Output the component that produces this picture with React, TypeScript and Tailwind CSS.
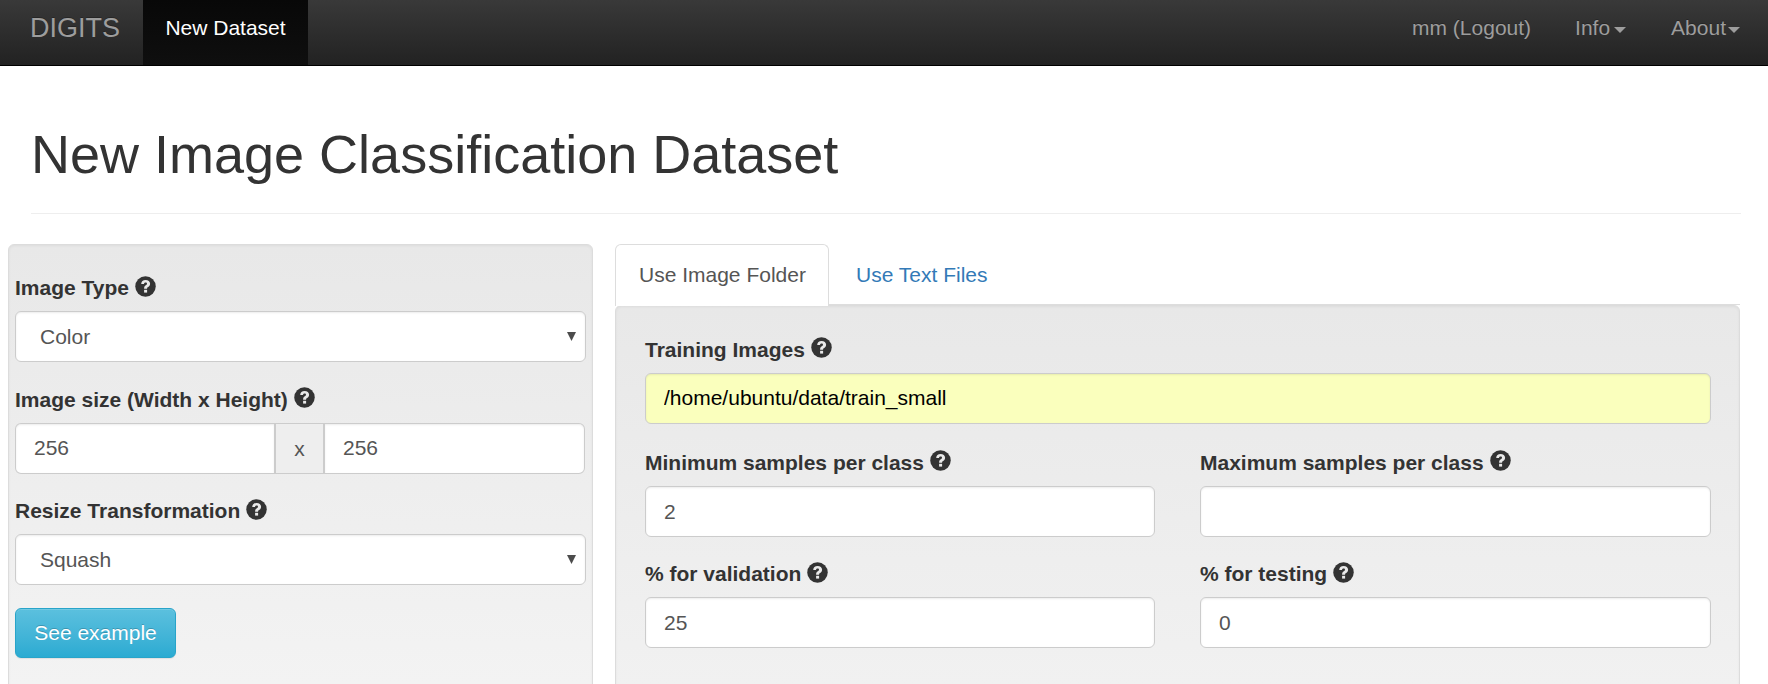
import React from "react";

function Caret({ className = "" }: { className?: string }) {
  return (
    <svg className={"h-[6px] w-3 shrink-0 " + className} viewBox="0 0 12 6" fill="currentColor">
      <path d="M0 0h12L6 6z" />
    </svg>
  );
}

function HelpIcon({ className }: { className: string }) {
  return (
    <svg className={"ml-[6px] size-[21px] shrink-0 " + className} viewBox="0 0 21 21">
      <circle cx="10.5" cy="10.5" r="10.25" fill="#333" />
      <path
        d="M6.2 8.1C6.3 5.4 7.9 4 10.6 4c2.7 0 4.5 1.4 4.5 3.8 0 1.6-.8 2.5-2 3.2-.8.5-1 .8-1 1.7H9.1c0-2 .5-2.8 1.8-3.5.8-.5 1.1-.8 1.1-1.4 0-.7-.5-1.2-1.4-1.2-1 0-1.5.5-1.6 1.5z"
        fill="#e9e9e9"
      />
      <path d="M9.1 13.8h3v2.8h-3z" fill="#e9e9e9" />
    </svg>
  );
}

function Label({ children, icon = "mt-[2px]" }: { children: string; icon?: string }) {
  return (
    <div className="flex h-[30px] font-bold leading-[30px] whitespace-nowrap text-[#333]">
      <span>{children}</span>
      <HelpIcon className={icon} />
    </div>
  );
}

const box =
  "block h-[51px] border border-[#ccc] px-[18px] text-[21px] leading-[30px] shadow-[inset_0_1px_2px_rgba(0,0,0,0.075)] outline-none ";

function TextField({ label, value, icon }: { label: string; value: string; icon?: string }) {
  return (
    <label className="block">
      <Label icon={icon}>{label}</Label>
      <input defaultValue={value} className={box + "mt-2 w-full rounded-[6px] bg-white text-[#555]"} />
    </label>
  );
}

function SelectField({ label, value }: { label: string; value: string }) {
  return (
    <label className="block">
      <Label icon="mt-[3px]">{label}</Label>
      <div className="relative mt-2">
        <select className={box + "w-full appearance-none rounded-[6px] bg-white pl-6 text-[#555]"}>
          <option>{value}</option>
        </select>
        <svg className="absolute top-[21px] right-[10px] h-[9px] w-[9px]" viewBox="0 0 9 9" fill="#4c4c4c">
          <path d="M0 0h9L4.500 9z" />
        </svg>
      </div>
    </label>
  );
}

const well =
  "border border-[#dcdcdc] bg-linear-to-b from-[#e8e8e8] to-[#f5f5f5] shadow-[inset_0_1px_3px_rgba(0,0,0,0.05)] ";

export default function App() {
  return (
    <div className="h-[684px] w-[1768px] overflow-hidden bg-white font-['Liberation_Sans',Arial,sans-serif] text-[21px] leading-[30px] text-[#333]">
      <nav className="flex h-[66px] border-b border-black bg-linear-to-b from-[#393939] to-[#222] text-[#9d9d9d] [text-shadow:0_-1px_0_rgba(0,0,0,0.25)]">
        <a className="w-[143px] pt-[13px] pl-[30px] text-[27px]">DIGITS</a>
        <a className="w-[165px] bg-linear-to-b from-[#080808] to-[#0f0f0f] pt-[13px] text-center text-white">
          New Dataset
        </a>
        <div className="ml-auto flex pt-[13px] pr-7">
          <a>mm (Logout)</a>
          <a className="ml-[44px] flex">
            Info
            <Caret className="mt-[14px] ml-1" />
          </a>
          <a className="ml-[45px] flex">
            About
            <Caret className="mt-[14px] ml-[2px]" />
          </a>
        </div>
      </nav>

      <h1 className="mr-[27px] ml-[31px] h-[148px] border-b border-[#eee] pt-[58px] text-[54px] leading-[60px] whitespace-nowrap">
        New Image Classification Dataset
      </h1>

      <main className="mt-[30px] flex items-start pl-2">
        <section className={well + "h-[520px] w-[585px] rounded-[6px] px-[6px] pt-7"}>
          <SelectField label="Image Type" value="Color" />
          <div className="mt-[23px]">
            <Label>Image size (Width x Height)</Label>
            <div className="mt-2 flex w-[570px]">
              <input
                defaultValue="256"
                className={box + "w-[261px] rounded-l-[6px] border-r-2 bg-white pb-[2px] text-[#555]"}
              />
              <span className="h-[51px] w-[47px] border-y border-[#ccc] bg-[#eee] pt-[10px] text-center text-[#555]">
                x
              </span>
              <input
                defaultValue="256"
                className={box + "w-[262px] rounded-r-[6px] border-l-2 bg-white pb-[2px] text-[#555]"}
              />
            </div>
          </div>
          <div className="mt-[22px]">
            <SelectField label="Resize Transformation" value="Squash" />
          </div>
          <button className="mt-[23px] h-[50px] w-[161px] rounded-[6px] border border-[#28a4c9] bg-linear-to-b from-[#5bc0de] to-[#2aabd2] text-white shadow-[inset_0_1px_0_rgba(255,255,255,0.15),0_1px_1px_rgba(0,0,0,0.075)] [text-shadow:0_-1px_0_rgba(0,0,0,0.2)]">
            See example
          </button>
        </section>

        <section className="ml-[22px] w-[1125px]">
          <div className="flex h-[61px] border-b border-[#ddd]">
            <a className="z-10 h-[62px] w-[214px] rounded-t-[6px] border border-b-0 border-[#ddd] bg-white pt-[15px] pl-[23px] text-[#555]">
              Use Image Folder
            </a>
            <a className="pt-4 pl-[27px] text-[#337ab7]">Use Text Files</a>
          </div>
          <div className={well + "h-[550px] rounded-[6px] px-[29px] pt-[29px]"}>
            <label className="block w-[1066px]">
              <Label>Training Images</Label>
              <input
                defaultValue="/home/ubuntu/data/train_small"
                className={box + "mt-2 w-full rounded-[6px] bg-[#faffbd] pb-[2px] text-black"}
              />
            </label>
            <div className="mt-6 grid grid-cols-[510px_511px] gap-x-[45px] gap-y-[22px]">
              <TextField label="Minimum samples per class" value="2" />
              <TextField label="Maximum samples per class" value="" />
              <TextField label="% for validation" value="25" icon="mt-[3px]" />
              <TextField label="% for testing" value="0" icon="mt-[3px]" />
            </div>
          </div>
        </section>
      </main>
    </div>
  );
}
